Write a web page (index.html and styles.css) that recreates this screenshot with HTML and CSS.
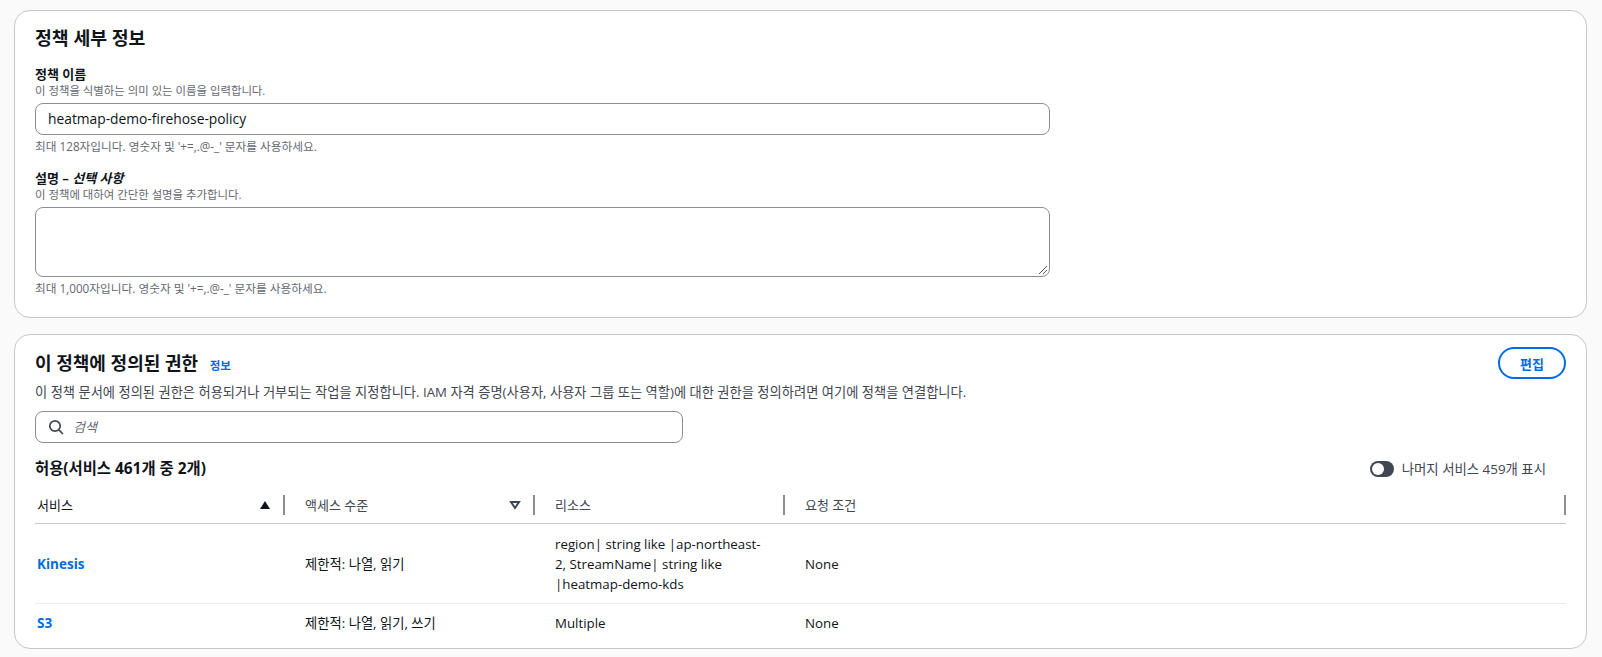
FILE: index.html
```html
<!DOCTYPE html>
<html lang="ko">
<head>
<meta charset="utf-8">
<title>정책 세부 정보</title>
<link rel="stylesheet" href="styles.css">
</head>
<body>
<section class="card details">
  <h2 class="title">정책 세부 정보</h2>
  <div class="label">정책 이름</div>
  <div class="desc">이 정책을 식별하는 의미 있는 이름을 입력합니다.</div>
  <div class="input">heatmap-demo-firehose-policy</div>
  <div class="hint">최대 128자입니다. 영숫자 및 '+=,.@-_' 문자를 사용하세요.</div>
  <div class="label label-second">설명 – <i>선택 사항</i></div>
  <div class="desc">이 정책에 대하여 간단한 설명을 추가합니다.</div>
  <div class="textarea">
    <svg class="grip" width="10" height="10" viewBox="0 0 10 10"><path d="M1 9 9 1M5 9 9 5" stroke="#555" fill="none"/></svg>
  </div>
  <div class="hint">최대 1,000자입니다. 영숫자 및 '+=,.@-_' 문자를 사용하세요.</div>
</section>
<section class="card perms">
  <div class="perm-head">
    <h2 class="title">이 정책에 정의된 권한 <a class="info">정보</a></h2>
    <button class="edit">편집</button>
  </div>
  <p class="lead">이 정책 문서에 정의된 권한은 허용되거나 거부되는 작업을 지정합니다. IAM 자격 증명(사용자, 사용자 그룹 또는 역할)에 대한 권한을 정의하려면 여기에 정책을 연결합니다.</p>
  <div class="search">
    <svg width="16" height="16" viewBox="0 0 16 16"><circle cx="7" cy="7" r="5.2" fill="none" stroke="#424650" stroke-width="1.7"/><path d="M10.8 10.8 15 15" stroke="#424650" stroke-width="1.7" fill="none"/></svg>
    <i>검색</i>
  </div>
  <div class="allow-row">
    <h3 class="allow">허용(서비스 461개 중 2개)</h3>
    <div class="toggle-wrap"><span class="toggle"><span class="knob"></span></span>나머지 서비스 459개 표시</div>
  </div>
  <div class="grid head">
    <div class="th first">서비스<svg class="sort" width="12" height="10" viewBox="0 0 12 10"><path d="M1 9 6 1l5 8z" fill="#0f141a"/></svg></div>
    <div class="th">액세스 수준<svg class="sort" width="12" height="10" viewBox="0 0 12 10"><path d="M2 2h8L6 8z" fill="none" stroke="#424650" stroke-width="2"/></svg></div>
    <div class="th">리소스</div>
    <div class="th">요청 조건</div>
  </div>
  <div class="grid row">
    <div class="td first"><a class="link">Kinesis</a></div>
    <div class="td">제한적: 나열, 읽기</div>
    <div class="td res">region| string like |ap-northeast-<wbr>2, StreamName| string like |heatmap-demo-kds</div>
    <div class="td">None</div>
  </div>
  <div class="grid row last">
    <div class="td first"><a class="link">S3</a></div>
    <div class="td">제한적: 나열, 읽기, 쓰기</div>
    <div class="td res">Multiple</div>
    <div class="td">None</div>
  </div>
</section>
</body>
</html>
```
FILE: styles.css
```css
* { box-sizing: border-box; }
html, body { height: 100%; }
body {
  margin: 0;
  padding: 10px 15px 0 14px;
  background: #fafafa;
  color: #0f141a;
  font-family: "Open Sans", "Noto Sans CJK KR", sans-serif;
  font-size: 14px;
  line-height: 20px;
  overflow: hidden;
}
.card {
  background: #fff;
  border: 1px solid #c6c6cd;
  border-radius: 16px;
  padding: 0 20px;
}
.details { height: 308px; padding-top: 14px; }
.perms { height: 315px; margin-top: 16px; padding-top: 12px; }
.title { margin: 0; font-size: 18.3px; line-height: 26px; font-weight: 700; }
.details .title { margin-bottom: 14px; }
.label { font-size: 13px; line-height: 18px; font-weight: 700; }
.label-second { margin-top: 15px; }
.label i { font-style: italic; }
.desc { font-size: 11.4px; line-height: 16px; color: #656871; margin-bottom: 4px; }
.hint { font-size: 11.7px; line-height: 16px; color: #656871; margin-top: 3px; }
.input {
  width: 1015px;
  height: 32px;
  border: 1px solid #8c8c94;
  border-radius: 8px;
  padding: 5px 12px;
  background: #fff;
  font-size: 13.8px;
}
.textarea {
  position: relative;
  width: 1015px;
  height: 70px;
  border: 1px solid #8c8c94;
  border-radius: 8px;
  background: #fff;
}
.grip { position: absolute; right: 1px; bottom: 1px; }
.perm-head { display: flex; justify-content: space-between; align-items: flex-start; }
.perm-head .title { margin-top: 3px; font-size: 18px; }
.info { margin-left: 7px; font-size: 11.5px; font-weight: 600; color: #006ce0; }
.edit {
  width: 68px;
  height: 32px;
  border: 2px solid #006ce0;
  border-radius: 16px;
  background: #fff;
  color: #006ce0;
  font: 700 13px "Open Sans", "Noto Sans CJK KR", sans-serif;
}
.lead { margin: 4px 0 0; font-size: 13.26px; line-height: 18px; color: #424650; }
.search {
  display: flex;
  align-items: center;
  gap: 9px;
  width: 648px;
  height: 32px;
  margin-top: 10px;
  padding: 0 12px;
  border: 1px solid #8c8c94;
  border-radius: 8px;
  color: #656871;
  font-size: 13px;
}
.allow-row { display: flex; justify-content: space-between; align-items: center; margin-top: 14px; height: 24px; padding-right: 20px; }
.allow { margin: 0; font-size: 15.4px; font-weight: 700; }
.toggle-wrap { display: flex; align-items: center; gap: 8px; font-size: 13.4px; color: #424650; }
.toggle { display: flex; align-items: center; width: 24px; height: 16px; padding: 2px; border-radius: 8px; background: #424650; }
.knob { width: 12px; height: 12px; border-radius: 50%; background: #fff; }
.grid { display: grid; grid-template-columns: 250px 250px 250px 1fr; }
.head { height: 38px; margin-top: 5px; border-bottom: 1px solid #c6c6cd; align-items: center; }
.th {
  display: flex;
  align-items: center;
  justify-content: space-between;
  height: 20px;
  padding: 0 12px 0 20px;
  border-right: 2px solid #8c8c94;
  font-size: 13px;
  color: #424650;
}
.th.first { padding-left: 2px; color: #0f141a; }
.th:last-child { padding-right: 0; border-right: 2px solid #8c8c94; }
.row { height: 80px; align-items: center; border-bottom: 1px solid #ebebf0; }
.row.last { height: 44px; padding-bottom: 6px; border-bottom: 0; }
.td { padding-left: 20px; font-size: 13.3px; }
.td.first { padding-left: 2px; }
.res { padding-right: 18px; }
.link { color: #006ce0; font-weight: 700; font-size: 13.5px; }
```
